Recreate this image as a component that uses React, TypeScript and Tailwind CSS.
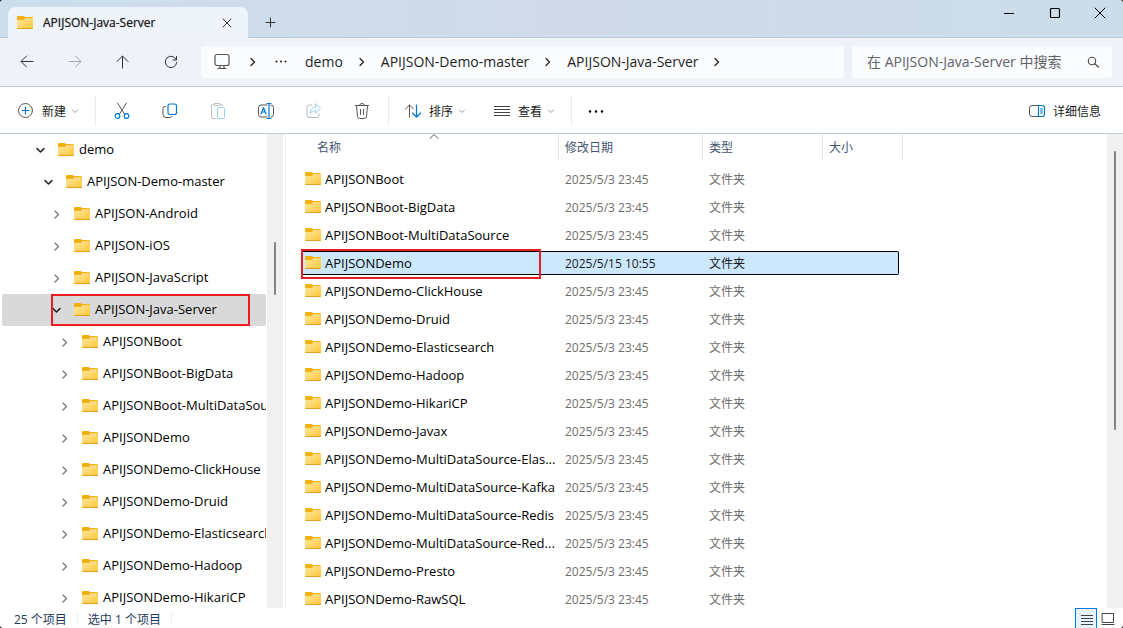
import type { ReactNode } from 'react'
import clsx from 'clsx'

type TreeItem = { name: string; level: number; open?: boolean; selected?: boolean }

const tree: TreeItem[] = [
  { name: 'demo', level: 0, open: true },
  { name: 'APIJSON-Demo-master', level: 1, open: true },
  { name: 'APIJSON-Android', level: 2 },
  { name: 'APIJSON-iOS', level: 2 },
  { name: 'APIJSON-JavaScript', level: 2 },
  { name: 'APIJSON-Java-Server', level: 2, open: true, selected: true },
  { name: 'APIJSONBoot', level: 3 },
  { name: 'APIJSONBoot-BigData', level: 3 },
  { name: 'APIJSONBoot-MultiDataSource', level: 3 },
  { name: 'APIJSONDemo', level: 3 },
  { name: 'APIJSONDemo-ClickHouse', level: 3 },
  { name: 'APIJSONDemo-Druid', level: 3 },
  { name: 'APIJSONDemo-Elasticsearch', level: 3 },
  { name: 'APIJSONDemo-Hadoop', level: 3 },
  { name: 'APIJSONDemo-HikariCP', level: 3 },
]

const indent = ['pl-[33px]', 'pl-[41px]', 'pl-[49px]', 'pl-[57px]']

const files = [
  'APIJSONBoot',
  'APIJSONBoot-BigData',
  'APIJSONBoot-MultiDataSource',
  'APIJSONDemo',
  'APIJSONDemo-ClickHouse',
  'APIJSONDemo-Druid',
  'APIJSONDemo-Elasticsearch',
  'APIJSONDemo-Hadoop',
  'APIJSONDemo-HikariCP',
  'APIJSONDemo-Javax',
  'APIJSONDemo-MultiDataSource-Elas...',
  'APIJSONDemo-MultiDataSource-Kafka',
  'APIJSONDemo-MultiDataSource-Redis',
  'APIJSONDemo-MultiDataSource-Red...',
  'APIJSONDemo-Presto',
  'APIJSONDemo-RawSQL',
]

const selectedFile = 'APIJSONDemo'

function Folder() {
  return (
    <svg width="16" height="13" viewBox="0 0 16 13" className="shrink-0">
      <defs>
        <linearGradient id="folder" x1="0" y1="0" x2="1" y2="1">
          <stop offset="0" stopColor="#ffe9a6" />
          <stop offset="1" stopColor="#fdc634" />
        </linearGradient>
      </defs>
      <path d="M0 1Q0 0 1 0H6.500Q7.500 0 8 1H15Q16 1 16 2V6H0Z" fill="#f4b010" />
      <path d="M0 4H7L8.500 2H16V12Q16 13 15 13H1Q0 13 0 12Z" fill="url(#folder)" />
      <path d="M0.300 12.500H15.700" stroke="#e5a01b" />
    </svg>
  )
}

function Icon({ size = 18, className, children }: { size?: number; className?: string; children: ReactNode }) {
  return (
    <svg
      width={size}
      height={size}
      viewBox={`0 0 ${size} ${size}`}
      fill="none"
      stroke="currentColor"
      strokeLinecap="round"
      strokeLinejoin="round"
      className={clsx('shrink-0', className)}
    >
      {children}
    </svg>
  )
}

function ChevronRight({ className }: { className?: string }) {
  return (
    <Icon size={14} className={className}>
      <path d="M5 3.500L8.500 7L5 10.500" strokeWidth="1.200" />
    </Icon>
  )
}

function SmallDown() {
  return (
    <Icon size={8} className="text-[#999]">
      <path d="M1.500 3L4 5.500L6.500 3" />
    </Icon>
  )
}

function IconButton({ label, className, children }: { label: string; className?: string; children: ReactNode }) {
  return (
    <button type="button" aria-label={label} className={clsx('flex h-8 w-12 shrink-0 items-center justify-center', className)}>
      {children}
    </button>
  )
}

function TitleBar() {
  return (
    <header className="flex h-[38px] shrink-0 border-b border-[#b9ccdc] bg-gradient-to-r from-[#cbdeec] via-[#d0daea] to-[#cbddea]">
      {/* Active tab */}
      <div className="-mb-px ml-2 mt-[7px] flex h-[31px] w-60 items-center rounded-t-lg bg-[#eff4fa] pl-[9px] pr-3">
        <Folder />
        <span className="ml-2.5 flex-1 whitespace-nowrap text-xs text-[#1a1a1a] [text-shadow:0_0_1px_#777]">APIJSON-Java-Server</span>
        <button type="button" aria-label="关闭标签页">
          <Icon className="text-[#333]">
            <path d="M5 5L13 13M13 5L5 13" />
          </Icon>
        </button>
      </div>
      <button type="button" aria-label="新标签页" className="ml-3.5 mt-2">
        <Icon className="text-[#333]">
          <path d="M8.500 4V13M4 8.500H13" />
        </Icon>
      </button>
      <div className="ml-auto flex h-[26px] pr-px">
        <IconButton label="最小化" className="-mt-[3px] w-[46px]">
          <Icon size={12} className="text-black">
            <path d="M1 6.500H11" strokeLinecap="butt" />
          </Icon>
        </IconButton>
        <IconButton label="最大化" className="-mt-[3px] w-[45px]">
          <Icon size={12} className="text-black">
            <rect x="1.500" y="1.500" width="9" height="9" rx="1" strokeWidth="1.200" />
          </Icon>
        </IconButton>
        <IconButton label="关闭" className="-mt-[3px] w-[45px]">
          <Icon size={12} className="text-black">
            <path d="M1 1L11 11M11 1L1 11" />
          </Icon>
        </IconButton>
      </div>
    </header>
  )
}

function NavBar() {
  return (
    <nav className="flex h-[49px] shrink-0 items-center border-b border-[#b9ccdc] bg-[#eff3f9] pl-[3px] pr-[11px] text-[#333]">
      <IconButton label="后退">
        <Icon><path d="M3.500 8.500H15M8.500 3L3 8.500L8.500 14" /></Icon>
      </IconButton>
      <IconButton label="前进" className="text-[#a5a9ae]">
        <Icon><path d="M3 8.500H14.500M9.500 3L15 8.500L9.500 14" /></Icon>
      </IconButton>
      <IconButton label="向上">
        <Icon><path d="M8.500 3.500V15M3 8.500L8.500 3L14 8.500" /></Icon>
      </IconButton>
      <IconButton label="刷新">
        <Icon><path d="M14.200 6.500A5.700 5.700 0 1 0 14.700 9.500M14.500 3.500V7H11" /></Icon>
      </IconButton>
      <div className="ml-1.5 flex h-8 flex-1 items-center rounded-[4px] bg-[#fbfcfe] pl-3 text-sm text-[#1f1f1f]">
        <Icon className="text-[#555]">
          <rect x="2" y="1.500" width="14" height="11" rx="2" strokeWidth="1.200" />
          <path d="M7 13V15M11 13V15M5 15.500H13" strokeWidth="1.200" />
        </Icon>
        <ChevronRight className="ml-[15px]" />
        <button type="button" aria-label="更多位置" className="ml-3">
          <Icon>
            <path d="M4.500 8.500h.01M9 8.500h.01M13.500 8.500h.01" strokeWidth="2" />
          </Icon>
        </button>
        <a href="#demo" className="ml-[15px]">demo</a>
        <ChevronRight className="ml-3" />
        <a href="#master" className="ml-3 whitespace-nowrap">APIJSON-Demo-master</a>
        <ChevronRight className="ml-3" />
        <a href="#server" className="ml-3 whitespace-nowrap">APIJSON-Java-Server</a>
        <ChevronRight className="ml-3" />
      </div>
      <div className="ml-2 flex h-8 w-[260px] items-center rounded-[4px] bg-[#fbfcfe] pl-[15px] pr-2.5">
        <input
          type="text"
          aria-label="搜索"
          placeholder="在 APIJSON-Java-Server 中搜索"
          className="min-w-0 flex-1 bg-transparent text-sm outline-none placeholder:text-[#5f6368]"
        />
        <Icon className="text-[#444]">
          <circle cx="8" cy="8" r="3.700" strokeWidth="1.100" />
          <path d="M11 11L14.500 14" strokeWidth="1.200" />
        </Icon>
      </div>
    </nav>
  )
}

function Divider() {
  return <div className="h-[30px] w-px shrink-0 bg-[#e9ecef]" />
}

function Toolbar() {
  return (
    <div className="flex h-[47px] shrink-0 items-center border-b border-[#bccbd8] bg-white pt-0.5 text-xs text-[#1a1a1a]">
      <button type="button" className="flex w-[95px] items-center pl-[17px]">
        <Icon className="text-[#555]">
          <circle cx="8.500" cy="8.500" r="7" />
          <path d="M8.500 5V12M5 8.500H12" stroke="#0078d4" strokeWidth="1.200" />
        </Icon>
        <span className="ml-[7px] mr-[5px] pt-0.5">新建</span>
        <SmallDown />
      </button>
      <Divider />
      <div className="ml-0.5 mr-0.5 flex text-[#555]">
        <IconButton label="剪切">
          <Icon>
            <path d="M4.500 1L11.500 12M13.500 1L6.500 12" />
            <circle cx="4.500" cy="14" r="2.300" stroke="#0078d4" strokeWidth="1.200" />
            <circle cx="13.500" cy="14" r="2.300" stroke="#0078d4" strokeWidth="1.200" />
          </Icon>
        </IconButton>
        <IconButton label="复制">
          <Icon>
            <path d="M4.500 4.500H4Q2 4.500 2 6.500V12.500Q2 15.500 5 15.500H9Q10.500 15.500 11 14.500" />
            <rect x="7" y="2" width="8.500" height="10.500" rx="2" stroke="#0078d4" strokeWidth="1.200" />
          </Icon>
        </IconButton>
        <IconButton label="粘贴" className="text-[#bbb]">
          <Icon>
            <path d="M5 2.500H3.500Q2.500 2.500 2.500 3.500V15Q2.500 16.500 4 16.500H6M11 2.500H12.500Q13.500 2.500 13.500 4" />
            <rect x="5" y="1.500" width="6" height="2" rx="1" />
            <rect x="8.500" y="5.500" width="7" height="11" rx="1" stroke="#9bcdf0" />
          </Icon>
        </IconButton>
        <IconButton label="重命名">
          <Icon>
            <path d="M10 3H4Q1.500 3 1.500 5.500V12.500Q1.500 15 4 15H10M14 3Q16.500 3 16.500 5.500V12.500Q16.500 15 14 15" />
            <path d="M4 12L6.500 5.500L9 12M5 10H8M12 1.500V16.500M10 1.500H14M10 16.500H14" stroke="#0078d4" strokeWidth="1.200" />
          </Icon>
        </IconButton>
        <IconButton label="共享" className="text-[#bbb]">
          <Icon>
            <path d="M7 3H4Q2 3 2 5V13.500Q2 15.500 4 15.500H12Q14 15.500 14 13.500V12" />
            <path d="M10.500 2L15.500 6.500L10.500 11V8.500Q6.500 8.500 5 11.500Q5.500 5.500 10.500 5Z" stroke="#9bcdf0" />
          </Icon>
        </IconButton>
        <IconButton label="删除">
          <Icon>
            <path d="M2.500 3.500H15.500M6.500 3.500Q6.500 1.500 9 1.500Q11.500 1.500 11.500 3.500M3.500 3.500L4.500 14.500Q4.800 16.500 6.500 16.500H11.500Q13.200 16.500 13.500 14.500L14.500 3.500M7.500 7.500V12.500M10.500 7.500V12.500" />
          </Icon>
        </IconButton>
      </div>
      <Divider />
      <button type="button" className="ml-[15px] flex items-center">
        <Icon className="text-[#555]">
          <path d="M5.500 15V3M1.500 7L5.500 3L9.500 7" />
          <path d="M12.500 3V15M8.500 11L12.500 15L16.500 11" stroke="#0078d4" strokeWidth="1.200" />
        </Icon>
        <span className="ml-[7px] mr-[5px] pt-0.5">排序</span>
        <SmallDown />
      </button>
      <button type="button" className="ml-[27px] flex items-center">
        <Icon className="text-[#444]">
          <path d="M1 4.500H17M1 7.500H17M1 10.500H17M1 13.500H17" strokeLinecap="butt" />
        </Icon>
        <span className="ml-[7px] mr-[5px] pt-0.5">查看</span>
        <SmallDown />
      </button>
      <div className="ml-4">
        <Divider />
      </div>
      <IconButton label="更多">
        <Icon className="text-black">
          <path d="M3 9.500h.01M9 9.500h.01M15 9.500h.01" strokeWidth="2.500" />
        </Icon>
      </IconButton>
      <button type="button" className="ml-auto mr-[22px] flex items-center">
        <Icon className="text-[#555]">
          <path d="M10 3.500H4Q1.500 3.500 1.500 6V12Q1.500 14.500 4 14.500H10" />
          <path d="M10.500 3.500H14Q16.500 3.500 16.500 6V12Q16.500 14.500 14 14.500H10.500ZM12.500 7H14.500M12.500 9H14.500M12.500 11H14.500" stroke="#0078d4" strokeWidth="1.200" />
        </Icon>
        <span className="ml-[7px] pt-0.5">详细信息</span>
      </button>
    </div>
  )
}

function Sidebar() {
  return (
    <aside className="flex w-[286px] shrink-0 border-r border-[#f2f2f2]">
      <ul className="h-full min-w-0 flex-1 overflow-hidden pl-0.5 pr-px">
        {tree.map((item) => (
          <li
            key={item.name}
            className={clsx(
              'relative flex h-8 items-center overflow-hidden rounded-[2px]',
              indent[item.level],
              item.selected && 'bg-[#d9d9d9]',
            )}
          >
            <Icon size={12} className={item.open ? 'text-[#222]' : 'text-[#888]'}>
              {item.open ? (
                <path d="M2 4.500L5.500 8L9 4.500" strokeWidth="1.600" />
              ) : (
                <path d="M4 3L7.500 6.500L4 10" strokeWidth="1.600" />
              )}
            </Icon>
            <div className="mb-0.5 ml-[11px] mr-[5px]">
              <Folder />
            </div>
            <span className="whitespace-nowrap">{item.name}</span>
            {/* Highlight frame */}
            {item.selected && <div className="absolute inset-y-0 left-[49px] w-[199px] border-2 border-[#ec1c24]" />}
          </li>
        ))}
      </ul>
      <div className="flex w-4 shrink-0 justify-center bg-[#f0f0f0]">
        <div className="mt-[108px] h-[53px] w-0.5 rounded bg-[#858585]" />
      </div>
      <div className="w-0.5 shrink-0" />
    </aside>
  )
}

function FileList() {
  return (
    <main className="min-w-0 flex-1 overflow-hidden pl-[15px]">
      <table className="w-[602px] table-fixed border-collapse text-left">
        <colgroup>
          <col className="w-[258px]" />
          <col className="w-36" />
          <col className="w-[120px]" />
          <col className="w-20" />
        </colgroup>
        <thead className="text-xs text-[#44546f]">
          <tr className="h-8 align-top">
            <th className="relative p-0 font-normal">
              <div className="h-[27px] border-r border-[#e5e5e5] pl-4 leading-[27px]">名称</div>
              <Icon size={10} className="absolute -top-[2px] left-[128px] text-[#555]">
                <path d="M1 6.500L5 2.500L9 6.500" />
              </Icon>
            </th>
            {['修改日期', '类型', '大小'].map((h) => (
              <th key={h} className="p-0 font-normal">
                <div className="h-[27px] border-r border-[#e5e5e5] pl-1.5 leading-[27px]">{h}</div>
              </th>
            ))}
          </tr>
        </thead>
        <tbody>
          {files.map((name) => {
            const on = name === selectedFile
            const box = on ? 'border-y border-black bg-[#cce8ff] text-[#1a1a1a]' : 'text-[#6d6d6d]'
            return (
              <tr key={name} className="h-7">
                <td className="relative p-0 pb-[3px] pt-px">
                  <div className={clsx('flex h-6 items-center pl-1', on && 'border-y border-black bg-[#cce8ff]')}>
                    <div className="mb-0.5">
                      <Folder />
                    </div>
                    <span className="ml-1 whitespace-nowrap pt-0.5 text-black">{name}</span>
                  </div>
                  {on && <div className="absolute -top-px left-0 h-[30px] w-60 border-2 border-[#ec1c24]" />}
                </td>
                <td className="p-0 pb-[3px] pt-px">
                  <div className={clsx('flex h-6 items-center pl-1.5 pt-0.5 text-xs', box)}>{on ? '2025/5/15 10:55' : '2025/5/3 23:45'}</div>
                </td>
                <td className="p-0 pb-[3px] pt-px">
                  <div className={clsx('flex h-6 items-center pl-1.5 pt-0.5 text-xs', box)}>文件夹</div>
                </td>
                <td className="p-0 pb-[3px] pr-1 pt-px">
                  <div className={clsx('h-6', box, on && 'rounded-r-[2px] border-r')} />
                </td>
              </tr>
            )
          })}
        </tbody>
      </table>
    </main>
  )
}

function StatusBar() {
  return (
    <footer className="flex h-5 shrink-0 items-center overflow-hidden bg-white pl-3.5 text-xs text-[#1e395b]">
      <span className="pr-2.5 pt-1">25 个项目</span>
      <div className="h-3 w-px bg-[#eee]" />
      <span className="px-2.5 pt-1">选中 1 个项目</span>
      <div className="h-3 w-px bg-[#eee]" />
      <div className="ml-auto mr-2 flex self-start text-[#444]">
        <button type="button" aria-label="详细信息视图" className="h-[22px] w-[22px] border border-[#0078d7] bg-[#e5f3fb] pl-[5px]">
          <Icon size={12}>
            <path d="M0 2.500H12M0 5.500H12M0 8.500H12M0 11.500H12" strokeLinecap="butt" />
          </Icon>
        </button>
        <button type="button" aria-label="大图标视图" className="h-[22px] pl-1">
          <Icon size={14}>
            <path d="M1.500 1.500H12.500V10.500H1.500ZM1 12.500H13" />
          </Icon>
        </button>
      </div>
    </footer>
  )
}

export default function App() {
  return (
    <div className="h-screen bg-[#333]">
      <div className="flex h-full flex-col overflow-hidden rounded-[4px] bg-white font-['Open_Sans','Noto_Sans_CJK_SC',sans-serif] text-[13px] text-black">
        <TitleBar />
        <NavBar />
        <Toolbar />
        <div className="flex min-h-0 flex-1">
          <Sidebar />
          <FileList />
          <div className="flex w-4 shrink-0 justify-center bg-[#f0f0f0]">
            <div className="mt-[17px] h-[279px] w-0.5 rounded bg-[#858585]" />
          </div>
        </div>
        <StatusBar />
      </div>
    </div>
  )
}
